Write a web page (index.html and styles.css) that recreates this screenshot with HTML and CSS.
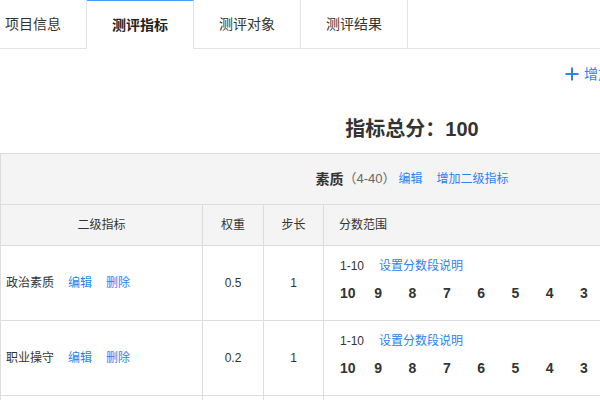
FILE: index.html
```html
<!DOCTYPE html>
<html lang="zh-CN">
<head>
<meta charset="utf-8">
<title>测评指标</title>
<link rel="stylesheet" href="styles.css">
</head>
<body>
<div class="page">
  <nav class="tabs">
    <div class="tab">项目信息</div>
    <div class="tab active">测评指标</div>
    <div class="tab">测评对象</div>
    <div class="tab">测评结果</div>
  </nav>

  <div class="toolbar">
    <a class="add-btn" href="#">
      <svg class="plus" width="14" height="14" viewBox="0 0 14 14" aria-hidden="true">
        <path d="M7 0.5V13.5M0.5 7H13.5" stroke="currentColor" stroke-width="2" fill="none"/>
      </svg>
      <span>增加一级指标</span>
    </a>
  </div>

  <h2 class="total">指标总分：100</h2>

  <div class="grid">
    <div class="group">
      <span class="group-name">素质</span>
      <span class="group-range">（4-40）</span>
      <a class="link first" href="#">编辑</a>
      <a class="link" href="#">增加二级指标</a>
    </div>

    <div class="cell head center">二级指标</div>
    <div class="cell head center">权重</div>
    <div class="cell head center">步长</div>
    <div class="cell head left">分数范围</div>

    <div class="cell row name">政治素质<a class="link" href="#">编辑</a><a class="link" href="#">删除</a></div>
    <div class="cell row center">0.5</div>
    <div class="cell row center">1</div>
    <div class="cell row score">
      <div class="range">1-10<a class="link" href="#">设置分数段说明</a></div>
      <div class="nums"><span>10</span><span>9</span><span>8</span><span>7</span><span>6</span><span>5</span><span>4</span><span>3</span><span>2</span><span>1</span></div>
    </div>

    <div class="cell row name">职业操守<a class="link" href="#">编辑</a><a class="link" href="#">删除</a></div>
    <div class="cell row center">0.2</div>
    <div class="cell row center">1</div>
    <div class="cell row score">
      <div class="range">1-10<a class="link" href="#">设置分数段说明</a></div>
      <div class="nums"><span>10</span><span>9</span><span>8</span><span>7</span><span>6</span><span>5</span><span>4</span><span>3</span><span>2</span><span>1</span></div>
    </div>

    <div class="cell row name">工作态度<a class="link" href="#">编辑</a><a class="link" href="#">删除</a></div>
    <div class="cell row center">0.3</div>
    <div class="cell row center">1</div>
    <div class="cell row score">
      <div class="range">1-10<a class="link" href="#">设置分数段说明</a></div>
      <div class="nums"><span>10</span><span>9</span><span>8</span><span>7</span><span>6</span><span>5</span><span>4</span><span>3</span><span>2</span><span>1</span></div>
    </div>
  </div>
</div>
</body>
</html>
```

FILE: styles.css
```css
html, body {
  margin: 0;
  padding: 0;
  overflow: hidden;
  background: #fff;
}

body {
  font-family: "Liberation Sans", "Noto Sans CJK SC", sans-serif;
  color: #333;
}

a {
  text-decoration: none;
}

.page {
  width: 824px;
}

/* Tabs */
.tabs {
  display: flex;
  margin-left: -20px;
  height: 48px;
  border-bottom: 1px solid #e4e4e4;
}

.tab {
  width: 107px;
  box-sizing: border-box;
  border-right: 1px solid #e4e4e4;
  display: flex;
  align-items: center;
  justify-content: center;
  font-size: 14px;
  line-height: 20px;
  color: #333;
}

.tab.active {
  height: 49px;
  margin-bottom: -1px;
  background: #fff;
  border-top: 1px solid #409eff;
  font-weight: bold;
  color: #222;
}

/* Toolbar */
.toolbar {
  display: flex;
  justify-content: flex-end;
  margin-top: 16px;
  height: 18px;
  padding-right: 156px;
}

.add-btn {
  display: flex;
  align-items: center;
  gap: 5px;
  color: #2a82f5;
  font-size: 14px;
  line-height: 18px;
}

.plus {
  display: block;
}

/* Total */
.total {
  margin: 32px 0 10px;
  font-size: 20px;
  line-height: 28px;
  font-weight: bold;
  text-align: center;
  color: #333;
}

/* Grid table */
.grid {
  display: grid;
  grid-template-columns: 202px 61px 60px 1fr;
  box-sizing: border-box;
  width: 824px;
  border-top: 1px solid #ddd;
  border-left: 1px solid #ddd;
}

.group {
  grid-column: 1 / -1;
  height: 51px;
  box-sizing: border-box;
  border-right: 1px solid #ddd;
  border-bottom: 1px solid #ddd;
  background: #f4f4f4;
  display: flex;
  align-items: center;
  justify-content: center;
  line-height: 20px;
}

.group-name {
  font-size: 14px;
  font-weight: bold;
  color: #333;
}

.group-range {
  font-size: 13px;
  color: #666;
}

.link {
  color: #2a82f5;
  font-size: 12px;
  margin-left: 14px;
}

.group .link.first {
  margin-left: 3px;
}

.cell {
  box-sizing: border-box;
  border-right: 1px solid #ddd;
  border-bottom: 1px solid #ddd;
  font-size: 12px;
  line-height: 20px;
  color: #333;
}

.head {
  height: 41px;
  background: #f4f4f4;
  display: flex;
  align-items: center;
}

.row {
  height: 75px;
}

.center {
  display: flex;
  align-items: center;
  justify-content: center;
}

.head.left {
  padding-left: 15px;
}

.name {
  display: flex;
  align-items: center;
  padding-left: 5px;
}

.score {
  padding: 10px 0 0 16px;
}

.range .link {
  margin-left: 15px;
}

.nums {
  display: flex;
  margin-top: 7px;
  font-size: 14px;
  font-weight: bold;
  color: #333;
}

.nums span {
  flex: 0 0 34.3px;
}
```
